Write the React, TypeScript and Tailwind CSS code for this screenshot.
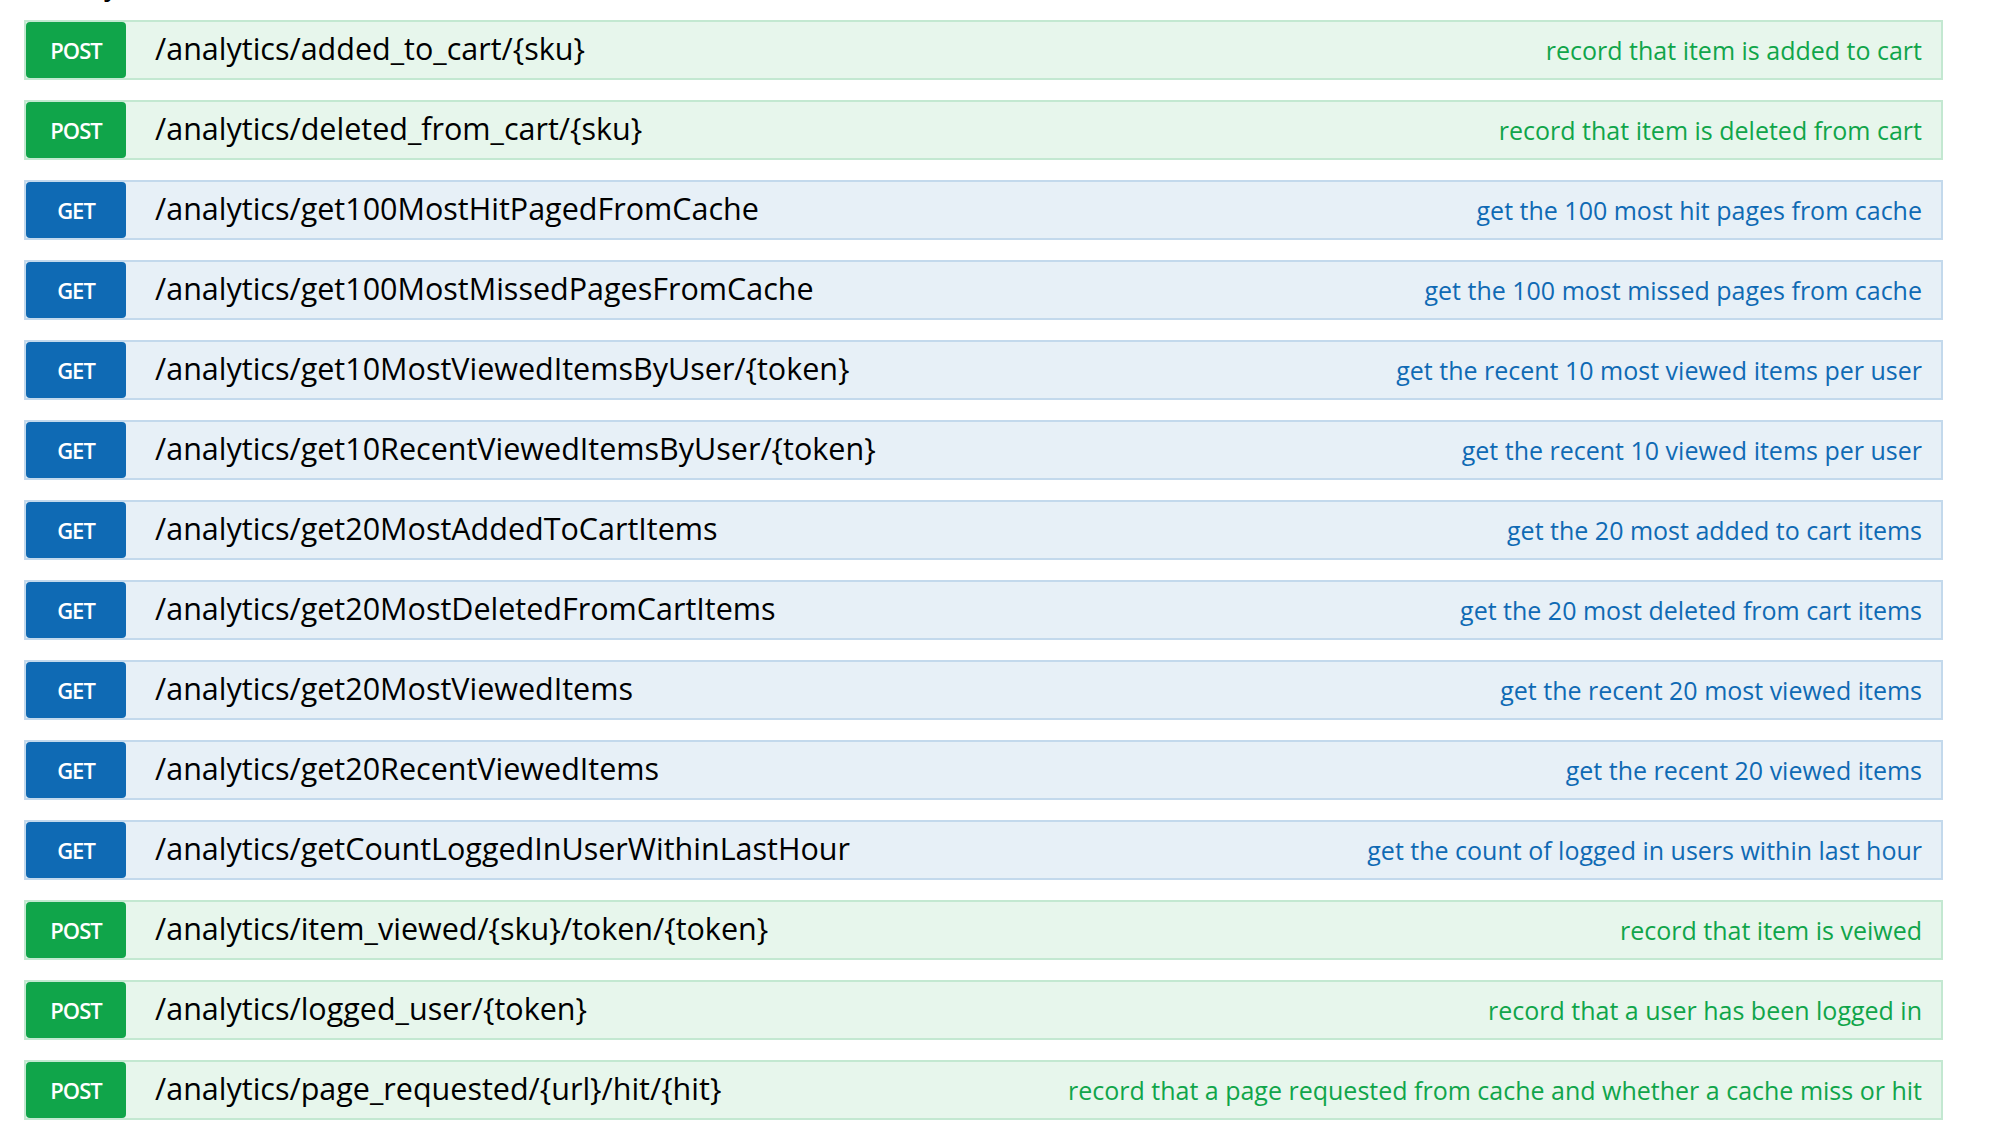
import React from "react";

type Row = { method: "GET" | "POST"; path: string; desc: string };

const rows: Row[] = [
  { method: "POST", path: "/analytics/added_to_cart/{sku}", desc: "record that item is added to cart" },
  { method: "POST", path: "/analytics/deleted_from_cart/{sku}", desc: "record that item is deleted from cart" },
  { method: "GET", path: "/analytics/get100MostHitPagedFromCache", desc: "get the 100 most hit pages from cache" },
  { method: "GET", path: "/analytics/get100MostMissedPagesFromCache", desc: "get the 100 most missed pages from cache" },
  { method: "GET", path: "/analytics/get10MostViewedItemsByUser/{token}", desc: "get the recent 10 most viewed items per user" },
  { method: "GET", path: "/analytics/get10RecentViewedItemsByUser/{token}", desc: "get the recent 10 viewed items per user" },
  { method: "GET", path: "/analytics/get20MostAddedToCartItems", desc: "get the 20 most added to cart items" },
  { method: "GET", path: "/analytics/get20MostDeletedFromCartItems", desc: "get the 20 most deleted from cart items" },
  { method: "GET", path: "/analytics/get20MostViewedItems", desc: "get the recent 20 most viewed items" },
  { method: "GET", path: "/analytics/get20RecentViewedItems", desc: "get the recent 20 viewed items" },
  { method: "GET", path: "/analytics/getCountLoggedInUserWithinLastHour", desc: "get the count of logged in users within last hour" },
  { method: "POST", path: "/analytics/item_viewed/{sku}/token/{token}", desc: "record that item is veiwed" },
  { method: "POST", path: "/analytics/logged_user/{token}", desc: "record that a user has been logged in" },
  { method: "POST", path: "/analytics/page_requested/{url}/hit/{hit}", desc: "record that a page requested from cache and whether a cache miss or hit" },
];

function Op({ row }: { row: Row }) {
  const post = row.method === "POST";
  return (
    <div
      className={
        post
          ? "flex h-[60px] items-center border-2 border-[#c3e8d1] bg-[#e7f6ec]"
          : "flex h-[60px] items-center border-2 border-[#c3d9ec] bg-[#e7f0f7]"
      }
    >
      <div
        className={
          post
            ? "flex h-full w-[100px] shrink-0 items-center justify-center rounded-[4px] bg-[#10a54a] text-[22px] font-semibold text-white"
            : "flex h-full w-[100px] shrink-0 items-center justify-center rounded-[4px] bg-[#0f6ab4] text-[22px] font-semibold text-white"
        }
      >
        <span className="tracking-[-1px]">{row.method}</span>
      </div>
      <div className="mb-[4px] ml-[29px] whitespace-nowrap text-[30.5px] leading-none text-black">{row.path}</div>
      <div
        className={
          post
            ? "ml-auto mr-[19px] whitespace-nowrap text-[25px] leading-none text-[#10a54a]"
            : "ml-auto mr-[19px] whitespace-nowrap text-[25px] leading-none text-[#0f6ab4]"
        }
      >
        {row.desc}
      </div>
    </div>
  );
}

export default function App() {
  return (
    <div className="h-[1134px] w-[2000px] overflow-hidden bg-white pl-[24px] pr-[57px] font-['Open_Sans',sans-serif]">
      <div className="flex h-[20px] items-start justify-between overflow-hidden">
        <div className="-mt-[30px] ml-[25px] text-[28px] leading-none text-black">analytics</div>
        <div className="-mt-[30px] mr-[110px] text-[24px] leading-none text-[#999]">
          Show/Hide | List Operations | Expand Operations
        </div>
      </div>
      <div className="flex flex-col gap-[20px]">
        {rows.map((r) => (
          <Op key={r.path} row={r} />
        ))}
      </div>
    </div>
  );
}
